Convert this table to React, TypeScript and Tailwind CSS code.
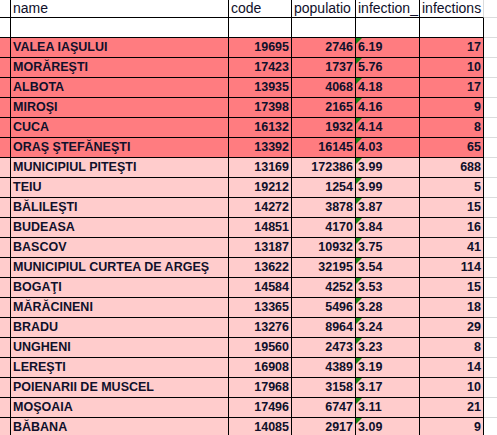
const ROWS: [string, number, number, string, number, boolean][] = [
  ['VALEA IAŞULUI', 19695, 2746, '6.19', 17, true],
  ['MORĂREŞTI', 17423, 1737, '5.76', 10, true],
  ['ALBOTA', 13935, 4068, '4.18', 17, true],
  ['MIROŞI', 17398, 2165, '4.16', 9, true],
  ['CUCA', 16132, 1932, '4.14', 8, true],
  ['ORAŞ ŞTEFĂNEŞTI', 13392, 16145, '4.03', 65, true],
  ['MUNICIPIUL PITEŞTI', 13169, 172386, '3.99', 688, false],
  ['TEIU', 19212, 1254, '3.99', 5, false],
  ['BĂLILEŞTI', 14272, 3878, '3.87', 15, false],
  ['BUDEASA', 14851, 4170, '3.84', 16, false],
  ['BASCOV', 13187, 10932, '3.75', 41, false],
  ['MUNICIPIUL CURTEA DE ARGEŞ', 13622, 32195, '3.54', 114, false],
  ['BOGAŢI', 14584, 4252, '3.53', 15, false],
  ['MĂRĂCINENI', 13365, 5496, '3.28', 18, false],
  ['BRADU', 13276, 8964, '3.24', 29, false],
  ['UNGHENI', 19560, 2473, '3.23', 8, false],
  ['LEREŞTI', 16908, 4389, '3.19', 14, false],
  ['POIENARII DE MUSCEL', 17968, 3158, '3.17', 10, false],
  ['MOŞOAIA', 17496, 6747, '3.11', 21, false],
  ['BĂBANA', 14085, 2917, '3.09', 9, false],
]

const cell = 'h-full shrink-0 overflow-hidden whitespace-nowrap border-r border-b border-black'

export default function App() {
  return (
    <div className="h-[435px] w-[497px] overflow-hidden bg-white font-['Liberation_Sans',Arial,sans-serif] text-[#10102a]">
      {/* header */}
      <div className="flex h-[18px] text-[14px] leading-[17px]">
        <div className={`${cell} w-[11px]`} />
        <div className={`${cell} w-[218px] pl-[2px]`}>name</div>
        <div className={`${cell} w-[63px] pl-[2px]`}>code</div>
        <div className={`${cell} w-[64px] pl-[2px]`}>populatio</div>
        <div className={`${cell} w-[64px] pl-[2px]`}>infection_</div>
        <div className="h-full w-[64px] shrink-0 overflow-hidden whitespace-nowrap border-r border-b border-r-[#dadcdd] border-b-black pl-[2px]">
          infections
        </div>
        <div className="h-full flex-1 border-b border-[#dadcdd]" />
      </div>

      {/* empty row */}
      <div className="flex h-[20px]">
        <div className={`${cell} w-[11px]`} />
        <div className={`${cell} w-[218px]`} />
        <div className={`${cell} w-[63px]`} />
        <div className={`${cell} w-[64px]`} />
        <div className={`${cell} w-[64px]`} />
        <div className={`${cell} w-[64px]`} />
        <div className="h-full flex-1 border-b border-[#dadcdd]" />
      </div>

      {ROWS.map(([name, code, pop, rate, inf, hot]) => {
        const bg = hot ? 'bg-[#ff7c80]' : 'bg-[#ffcccc]'
        return (
          <div key={name} className="flex h-[20px] text-[12.5px] font-bold leading-[19px]">
            <div className={`${cell} ${bg} w-[11px]`} />
            <div className={`${cell} ${bg} w-[218px] pl-[2px]`}>{name}</div>
            <div className={`${cell} ${bg} w-[63px] pr-[2px] text-right`}>{code}</div>
            <div className={`${cell} ${bg} w-[64px] pr-[2px] text-right`}>{pop}</div>
            <div className={`${cell} ${bg} relative w-[64px] pl-[2px]`}>
              {/* number-stored-as-text marker */}
              <span className="absolute left-0 top-0 h-0 w-0 border-t-[6px] border-r-[6px] border-t-[#168a16] border-r-transparent" />
              {rate}
            </div>
            <div className={`${cell} ${bg} w-[64px] pr-[2px] text-right`}>{inf}</div>
            <div className="h-full flex-1 border-b border-[#dadcdd]" />
          </div>
        )
      })}
    </div>
  )
}
